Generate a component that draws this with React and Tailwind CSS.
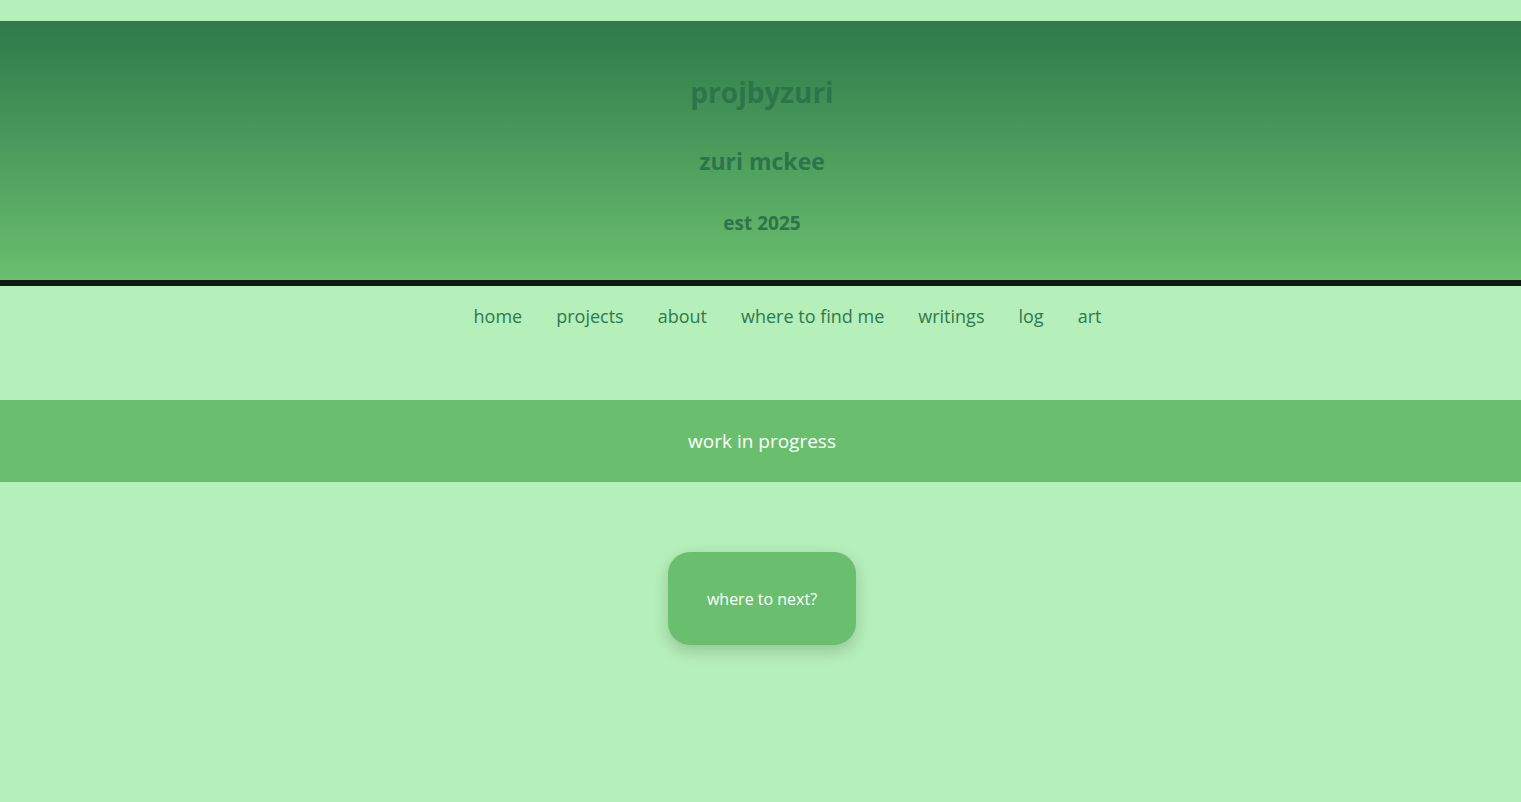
const links = ['home', 'projects', 'about', 'where to find me', 'writings', 'log', 'art']

function App() {
  return (
    <div className="min-h-[802px] bg-[#b5efba] pt-[21px] font-['Open_Sans',sans-serif]">
      {/* header */}
      <header className="flex h-[259px] flex-col items-center bg-gradient-to-b from-[#2e7a4b] to-[#6abf6e] pl-[3px] pt-[57px] text-[#2c744a]">
        <h1 className="text-[28px] font-bold leading-none">projbyzuri</h1>
        <h2 className="mt-[44px] text-[23px] font-bold leading-none">zuri mckee</h2>
        <h3 className="mt-[41px] text-[19px] font-bold leading-none">est 2025</h3>
      </header>
      <div className="h-[6px] bg-[#0f1a12]" />

      {/* nav */}
      <nav className="flex justify-center gap-[34px] pl-[54px] pt-[18px] text-[18px] text-[#2e7a4b]">
        {links.map((l) => (
          <a key={l} href="#" className="leading-[24px]">
            {l}
          </a>
        ))}
      </nav>

      {/* banner */}
      <div className="mt-[72px] flex h-[82px] items-center justify-center bg-[#6abf6f] pl-[3px] text-[19px] text-white">
        work in progress
      </div>

      <div className="flex justify-center pl-[3px] pt-[70px]">
        <button className="h-[93px] w-[188px] rounded-[22px] bg-[#6abf6f] text-[16px] text-white shadow-[0_6px_16px_rgba(0,0,0,0.18)]">
          where to next?
        </button>
      </div>
    </div>
  )
}

export default App
